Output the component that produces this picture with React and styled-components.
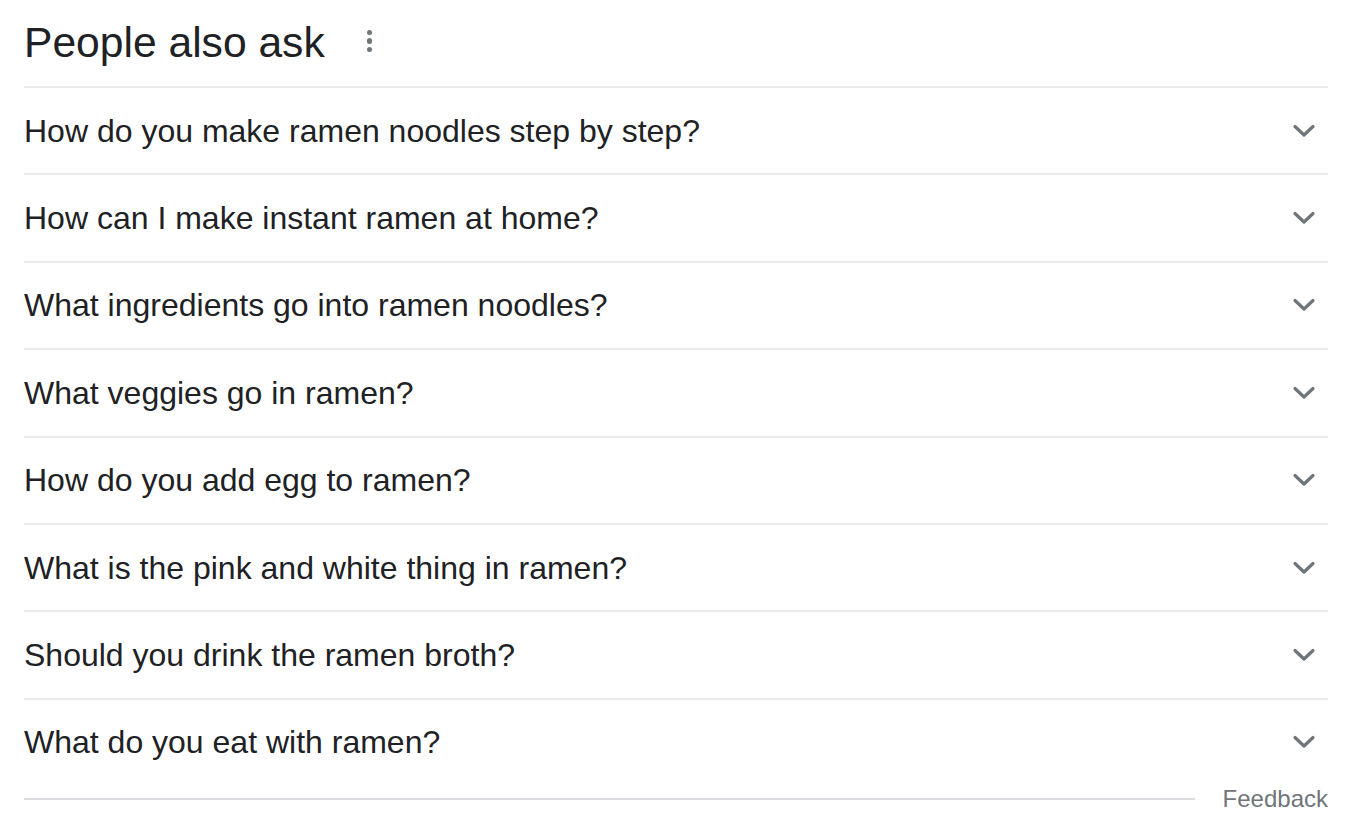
import styled, { createGlobalStyle } from "styled-components";

const questions = [
  "How do you make ramen noodles step by step?",
  "How can I make instant ramen at home?",
  "What ingredients go into ramen noodles?",
  "What veggies go in ramen?",
  "How do you add egg to ramen?",
  "What is the pink and white thing in ramen?",
  "Should you drink the ramen broth?",
  "What do you eat with ramen?",
];

function Chevron() {
  return (
    <svg width="24" height="24" viewBox="0 0 24 24">
      <path
        d="M3 7.5 L12 16 L21 7.5"
        fill="none"
        stroke="#70757a"
        strokeWidth="3.2"
        strokeLinecap="round"
        strokeLinejoin="round"
      />
    </svg>
  );
}

export default function App() {
  return (
    <>
      <GlobalStyle />
      <Panel>
        <Header>
          <Title>People also ask</Title>
          <MoreBtn aria-label="More options">
            <Dot />
            <Dot />
            <Dot />
          </MoreBtn>
        </Header>
        <List>
          {questions.map((q) => (
            <Row key={q}>
              <Question>{q}</Question>
              <IconBox>
                <Chevron />
              </IconBox>
            </Row>
          ))}
        </List>
        <Footer>
          <FooterLine />
          <Feedback>Feedback</Feedback>
        </Footer>
      </Panel>
    </>
  );
}

const GlobalStyle = createGlobalStyle`
  body {
    margin: 0;
    background: #fff;
    font-family: "Liberation Sans", Arial, sans-serif;
  }
`;

const Panel = styled.div`
  width: 1304px;
  margin-left: 24px;
  color: #202124;
`;

const Header = styled.div`
  display: flex;
  align-items: center;
  height: 86px;
  gap: 42px;
`;

const Title = styled.h2`
  margin: 0;
  font-size: 42.6px;
  font-weight: 400;
  padding-bottom: 2px;
`;

const MoreBtn = styled.div`
  display: flex;
  flex-direction: column;
  gap: 3px;
  padding-bottom: 4px;
`;

const Dot = styled.span`
  width: 5.5px;
  height: 5.5px;
  border-radius: 50%;
  background: #70757a;
`;

const List = styled.div`
  display: flex;
  flex-direction: column;
`;

const Row = styled.div`
  display: flex;
  align-items: center;
  justify-content: space-between;
  height: 87.4px;
  box-sizing: border-box;
  border-top: 2px solid #ebebeb;
`;

const Question = styled.span`
  font-size: 32px;
  line-height: 38px;
`;

const IconBox = styled.span`
  display: flex;
  margin-right: 12px;
`;

const Footer = styled.div`
  display: flex;
  align-items: center;
  gap: 28px;
  margin-top: -1px;
`;

const FooterLine = styled.div`
  flex: 1;
  height: 2px;
  background: #dadce0;
`;

const Feedback = styled.span`
  font-size: 24px;
  color: #70757a;
  line-height: 30px;
`;
